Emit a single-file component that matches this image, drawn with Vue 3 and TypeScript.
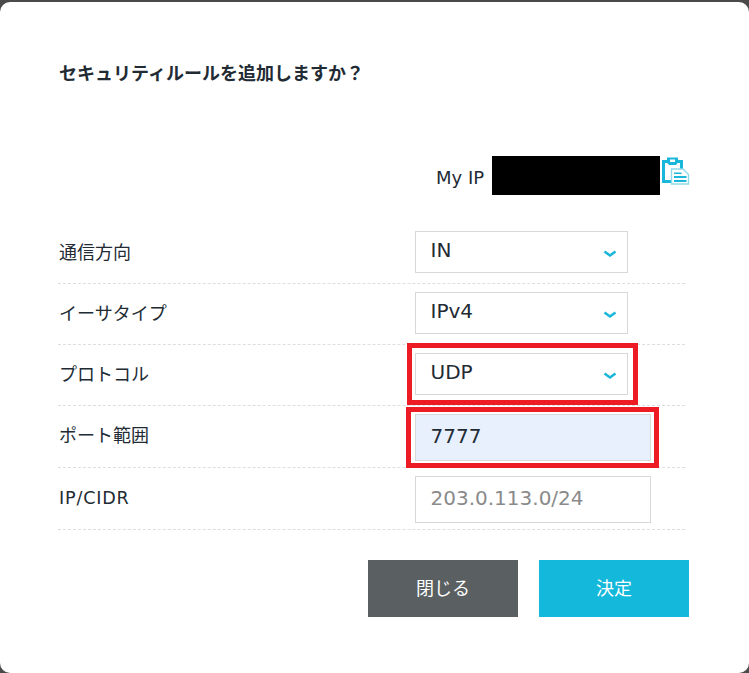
<script setup lang="ts">
import { ref } from 'vue'

interface SelectRow {
  label: string
  options: string[]
  highlighted: boolean
}

const selects = ref<SelectRow[]>([
  { label: '通信方向', options: ['IN', 'OUT'], highlighted: false },
  { label: 'イーサタイプ', options: ['IPv4', 'IPv6'], highlighted: false },
  { label: 'プロトコル', options: ['UDP', 'TCP', 'ICMP'], highlighted: true },
])
const port = ref('7777')
const cidr = ref('')
</script>

<template>
  <div class="backdrop">
    <section class="modal">
      <h2 class="title">セキュリティルールを追加しますか？</h2>

      <div class="myip">
        <span class="myip-label">My IP</span>
        <span class="redacted"></span>
        <svg class="clip" width="30" height="30" viewBox="0 0 30 30" aria-hidden="true">
          <path d="M0 3h21v10h-3V6H3v17h7v3H0z" fill="#1ab7da" />
          <path d="M5 0.500h11v5l-2 2.500H7L5 5.500z" fill="#1ab7da" />
          <path d="M8 2.500h5v2.500H8z" fill="#fff" />
          <path d="M9.500 12h11.500l5.500 5.500V27H9.500z" fill="#fff" stroke="#8fd9ea" stroke-width="1.400" />
          <path d="M12 15.500h7.500v1.500H12zM12 19h12.500v2H12zM12 23h12.500v2H12z" fill="#1ab7da" />
        </svg>
      </div>

      <div class="form">
        <div v-for="row in selects" :key="row.label" class="row">
          <label class="label">{{ row.label }}</label>
          <div class="field field-select" :class="{ 'mark-select': row.highlighted }">
            <select class="control select">
              <option v-for="o in row.options" :key="o">{{ o }}</option>
            </select>
            <svg class="chevron" width="14" height="8" viewBox="0 0 14 8" aria-hidden="true">
              <path d="M1.500 1.500 7 5.500l5.500-4" fill="none" stroke="#1ab7da" stroke-width="2.600" />
            </svg>
          </div>
        </div>

        <div class="row">
          <label class="label">ポート範囲</label>
          <div class="field field-input mark-input">
            <input v-model="port" class="control input filled" />
          </div>
        </div>

        <div class="row">
          <label class="label label-latin">IP/CIDR</label>
          <div class="field field-input">
            <input v-model="cidr" class="control input" placeholder="203.0.113.0/24" />
          </div>
        </div>
      </div>

      <div class="actions">
        <button class="btn btn-close" type="button">閉じる</button>
        <button class="btn btn-ok" type="button">決定</button>
      </div>
    </section>
  </div>
</template>

<style>
html, body { margin: 0; padding: 0; background: #4a4a4a; }
</style>

<style scoped>
.backdrop {
  width: 749px;
  height: 673px;
  padding-top: 2px;
  box-sizing: border-box;
  background: #4a4a4a;
  overflow: hidden;
}
.modal {
  height: 671px;
  box-sizing: border-box;
  background: #fff;
  border-radius: 10px;
  padding: 58px 60px 0 58px;
  font-family: "DejaVu Sans", "Noto Sans CJK JP", sans-serif;
  color: #222b33;
}
.title {
  margin: 0 0 0 1px;
  font-size: 18px;
  line-height: 24px;
  font-weight: 700;
  font-family: "Noto Sans CJK JP", sans-serif;
}
.myip {
  display: flex;
  align-items: flex-start;
  margin-top: 72px;
  margin-left: 378px;
  height: 39px;
}
.myip-label {
  flex: none;
  font-size: 18px;
  line-height: 44px;
  width: 56px;
}
.redacted {
  flex: none;
  width: 168px;
  height: 39px;
  background: #000;
}
.clip { flex: none; margin: 1px 0 0 2px; }
.form {
  margin-top: 36px;
  width: 627px;
}
.row {
  display: flex;
  align-items: center;
  padding: 8px 0 10px;
  border-bottom: 1px dashed #dedede;
}
.row:first-child { padding-top: 0; }
.label {
  width: 357px;
  padding-left: 1px;
  margin-bottom: 3px;
  box-sizing: border-box;
  font-size: 18px;
}
.label-latin {
  margin-bottom: 0;
  font-size: 17.6px;
  letter-spacing: 0.8px;
}
.field { position: relative; }
.field-select { width: 213px; height: 42px; }
.field-input { width: 236px; height: 47px; margin-bottom: -4px; }
.control {
  display: block;
  width: 100%;
  height: 100%;
  box-sizing: border-box;
  border: 1px solid #d8d8d8;
  border-radius: 0;
  background: #fff;
  padding: 0 14.5px 4px;
  font-family: "DejaVu Sans", sans-serif;
  font-size: 20px;
  color: #222b33;
  outline: none;
  appearance: none;
}
.input::placeholder { color: #8a8a8a; opacity: 1; }
.filled { background: #e8f0fe; }
.chevron {
  position: absolute;
  right: 11px;
  top: 19px;
  pointer-events: none;
}
.mark-select::after,
.mark-input::after {
  content: "";
  position: absolute;
  border: 5px solid #ed1c24;
  pointer-events: none;
}
.mark-select::after { left: -8px; right: -10px; top: -10px; bottom: -10px; }
.mark-input::after { left: -9px; right: -8px; top: -7px; bottom: -7px; }
.actions {
  display: flex;
  justify-content: flex-end;
  gap: 21px;
  margin-top: 30px;
}
.btn {
  width: 150px;
  height: 57px;
  padding: 0 0 4px;
  border: 0;
  color: #fff;
  font-family: "Noto Sans CJK JP", sans-serif;
  font-size: 18px;
}
.btn-close { background: #5a6061; }
.btn-ok { background: #13b8da; }
</style>
